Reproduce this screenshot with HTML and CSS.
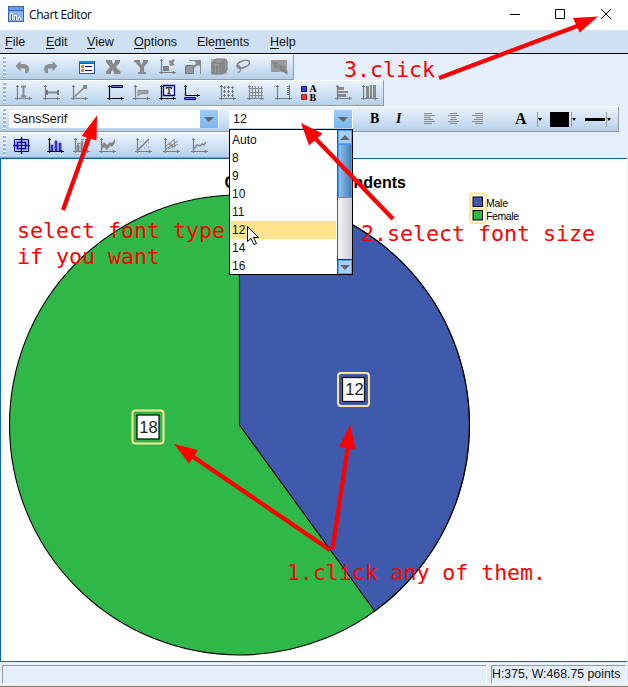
FILE: index.html
```html
<!DOCTYPE html>
<html lang="en">
<head>
<meta charset="utf-8">
<title>Chart Editor</title>
<link rel="stylesheet" href="styles.css">
</head>
<body>
<svg class="defs" width="0" height="0">
  <defs>
    <symbol id="axes" viewBox="0 0 18 18"><path d="M2.500 1v15M0 14.500h17M1 2.500h3M14.500 13v3" fill="none" stroke="currentColor" stroke-width="1.200"/></symbol>
  </defs>
</svg>
<div class="window">
  <header class="titlebar">
    <svg class="app-icon" width="16" height="16" viewBox="0 0 16 16" shape-rendering="crispEdges"><path fill="#3165c4" d="M0 0h16v16H0z"/><path fill="#6f9ae6" d="M1 1h14v3H1z"/><path fill="#8fb3f0" d="M1 5h14v10H1z"/><path d="M2.500 14V7.500h2V14M6.500 14V9.500h2V14M10.500 14v-3h2v3" fill="#3165c4" stroke="#e8f1ff"/></svg>
    <span class="title">Chart Editor</span>
    <svg class="controls" width="100" height="14" viewBox="0 0 100 14"><path d="M0 7.500h10M45.500 2.500h9v9h-9zM91 2l10 10M101 2L91 12" fill="none" stroke="#000"/></svg>
  </header>
  <nav class="menubar">
    <span><u>F</u>ile</span><span><u>E</u>dit</span><span><u>V</u>iew</span><span><u>O</u>ptions</span><span>Ele<u>m</u>ents</span><span><u>H</u>elp</span>
  </nav>

  <div class="toolbar edit-tools">
    <i class="grip"></i>
    <svg viewBox="0 0 18 18"><path d="M1.500 8l5-5v3h4q4.500 1 4.500 5t-4 4.500v-3q1-2-1-2H6.500v3z" fill="#8b8f94"/></svg>
    <svg viewBox="0 0 18 18"><path d="M15.500 8l-5-5v3h-4Q2 7 2 11t4 4.500v-3q-1-2 1-2h3.500v3z" fill="#8b8f94"/></svg>
    <svg viewBox="0 0 18 18" shape-rendering="crispEdges"><path d="M0 3h16v13H0z" fill="#1c5aa8"/><path d="M0 3h15v2H0z" fill="#1688e8"/><path d="M1 6h14v9H1z" fill="#fff"/><path d="M2 7h3v3H2zM2 11h3v3H2z" fill="#f47b20"/><path d="M6 8.500h7M6 12.500h7" stroke="#00008b"/></svg>
    <svg viewBox="0 0 18 18"><path d="M1 2h6v2l1.500 2L10 4V2h5v2l-4 5 4.500 4.500V16H9v-2l-1.500-2L6 14v2H1v-2.500L5 9 1 4z" fill="#888"/></svg>
    <svg viewBox="0 0 18 18"><path d="M1 2h6v2l1.500 3L10 4V2h5v2l-4 5v5h2v2H5v-2h2V9.500L2 4H1z" fill="#888"/></svg>
    <svg viewBox="0 0 18 18"><use href="#axes"/><path d="M4.500 8.500h5v4h-5z" fill="#888" stroke="#777"/><path d="M10 2l1 6 5-1-2-2 2-3-2-1-2 2z" fill="#888"/></svg>
    <svg viewBox="0 0 18 18"><path d="M.5 7.500h8v8h-8z" fill="#999" stroke="#777"/><path d="M4 2.500h11.500V16" fill="none" stroke="#888"/><path d="M9 2h6v6l-2-1-4 3-1-1 3-4z" fill="#888"/></svg>
    <svg viewBox="0 0 18 18"><path d="M0 1h16v15H0z" fill="#aaa"/><path d="M1 5l4-4h9l2 2v9l-4 4H1zM1 5h10v11M11 5l4-4M3 7v9M6 7v9M9 6v9M13 5v9" fill="#999" stroke="#777"/></svg>
    <svg viewBox="0 0 18 18"><path d="M3 10Q0 7 5 4q5-3 9-1 2 4-4 6-6 3-7 0 0-3 2 0 2 3-2 6" fill="none" stroke="#888" stroke-width="1.500"/></svg>
    <svg viewBox="0 0 18 18"><path d="M0 2h16v12H0z" fill="#999"/><path d="M1 5h5l4 4h5M4 6v3h4M9 9l7 4v3l-7-5z" fill="#888" stroke="#7d7d7d"/></svg>
  </div>

  <div class="toolbar element-tools">
    <i class="grip"></i>
    <svg viewBox="0 0 18 18"><use href="#axes"/><path d="M6 2.500h5M6 12.500h5M8.500 2v11" stroke="#888" stroke-width="2"/></svg>
    <svg viewBox="0 0 18 18"><use href="#axes"/><path d="M4 8.500h12" stroke="#888" stroke-width="2"/><path d="M4 6v5M15 6v5" stroke="#777" stroke-width="2"/></svg>
    <svg viewBox="0 0 18 18"><use href="#axes"/><path d="M3 13L14 3" stroke="#888" stroke-width="1.600"/><path d="M12 1h4v4h-4z" fill="#888"/></svg>
    <svg class="on" viewBox="0 0 18 18"><use href="#axes"/><path d="M4.500 1.500h11v2h-11z" fill="#77c" stroke="#00008b"/></svg>
    <svg viewBox="0 0 18 18"><use href="#axes"/><path d="M5 6.500h10v3H8L5 12z" fill="#aaa" stroke="#888"/></svg>
    <svg class="on" viewBox="0 0 18 18"><use href="#axes"/><path d="M4.500 1.500h11v10h-11z" fill="#eef" stroke="#00008b" stroke-width="1.300"/><path d="M7.500 5V3.500h5V5M10 3v6.500M8.500 9.500h3" fill="none" stroke="#333" stroke-width="1.300"/></svg>
    <svg class="on" viewBox="0 0 18 18"><path d="M2.500 1v10.500H17M1 2.500h3M14.500 10v3" fill="none" stroke="#000" stroke-width="1.200"/><path d="M1.500 13.500h11v2h-11z" fill="#66d" stroke="#00008b"/></svg>
    <svg viewBox="0 0 18 18"><use href="#axes"/><path d="M4 3.500h12M4 7.500h12M4 11.500h12" stroke="#888" stroke-dasharray="3 1"/><path d="M5 3.500h11M5 7.500h11M5 11.500h11" stroke="#777" stroke-width="3" stroke-dasharray="1 3"/></svg>
    <svg viewBox="0 0 18 18"><use href="#axes"/><path d="M2 4.500h14M2 8.500h14M2 11.500h14M5.500 2v13M8.500 2v13M11.500 2v13M14.500 2v13" stroke="#888"/></svg>
    <svg viewBox="0 0 18 18"><use href="#axes"/><path d="M14.500 1v13M12 2.500h2M12 4.500h2M12 6.500h2M12 8.500h2M12 10.500h2" stroke="#777"/></svg>
    <svg viewBox="0 0 18 18"><path d="M.5 2.500h5v5h-5z" fill="#3344d8" stroke="#00006b"/><path d="M.5 10.500h5v5h-5z" fill="#e33" stroke="#922"/><g class="ab"><text x="8.500" y="8">A</text><text x="8.500" y="17">B</text></g></svg>
    <svg viewBox="0 0 18 18"><use href="#axes"/><path d="M3 3h6v3H3zM3 7h10v2H3zM3 10h8v3H3z" fill="#888"/></svg>
    <svg viewBox="0 0 18 18"><use href="#axes"/><path d="M5 2h3v12H5zM9 1h2v13H9zM12 1h3v13h-3z" fill="#888"/></svg>
  </div>

  <div class="toolbar format-tools">
    <i class="grip"></i>
    <div class="combo font-combo"><span>SansSerif</span><b class="drop"></b></div>
    <div class="combo size-combo"><span>12</span><b class="drop"></b>
      <div class="menu">
        <ul><li>Auto</li><li>8</li><li>9</li><li>10</li><li>11</li><li class="selected">12</li><li>14</li><li>16</li></ul>
        <div class="scrollbar"><b class="arrow up"></b><b class="thumb"></b><b class="track"></b><b class="arrow down"></b></div>
      </div>
    </div>
    <span class="style-btn">B</span>
    <span class="style-btn italic">I</span>
    <svg viewBox="0 0 18 18"><path d="M0 3.500h8M0 5.500h11M0 7.500h7M0 9.500h9M0 11.500h11M0 13.500h8" stroke="#888"/></svg>
    <svg viewBox="0 0 18 18"><path d="M2 3.500h7M0 5.500h11M3 7.500h5M2 9.500h7M0 11.500h11M2 13.500h7" stroke="#888"/></svg>
    <svg viewBox="0 0 18 18"><path d="M3 3.500h8M0 5.500h11M4 7.500h7M2 9.500h9M0 11.500h11M3 13.500h8" stroke="#888"/></svg>
    <span class="style-btn letter">A</span><i class="split"></i>
    <span class="swatch"></span><i class="split"></i>
    <span class="stroke"></span><i class="split"></i>
  </div>

  <div class="toolbar fit-tools">
    <i class="grip"></i>
    <svg viewBox="0 0 18 18"><path d="M1.500 2.500h14v12h-14z" fill="#b9b9f5" stroke="#0000b5"/><path d="M4.500 5.500h8v6h-8z" fill="#fff" stroke="#0000b5" stroke-width="1.500"/><path d="M8.500 0v17M0 8.500h17" stroke="#0000b5" stroke-width="1.500"/></svg>
    <svg class="on" viewBox="0 0 18 18"><use href="#axes"/><path d="M4 8h2v6H4zM8 4h2v10H8zM12 6h2v8h-2z" fill="#4444d8" stroke="#1111a8" stroke-width=".7"/></svg>
    <svg viewBox="0 0 18 18"><use href="#axes"/><path d="M4 8h2v6H4zM8 5h2v9H8zM12 5h2v9h-2zM5 6v3M9 2v4M13 2v4M4 6.500h3M8 2.500h3M12 2.500h3" fill="#888" stroke="#888"/></svg>
    <svg viewBox="0 0 18 18"><use href="#axes"/><path d="M2 9l3-4 3 3 3-3 2 1 3-4v4l-3 4-2-1-3 4-3-3-3 3z" fill="#888"/></svg>
    <svg viewBox="0 0 18 18"><use href="#axes"/><path d="M3 13L14 2" stroke="#777" stroke-width="1.400"/><path d="M5 5h1M8 4h1M5 9h1M11 8h1M9 11h1M13 6h1M13 10h1" stroke="#888"/></svg>
    <svg viewBox="0 0 18 18"><use href="#axes"/><path d="M3 12L15 4M3 9l9-7M5 12l10-5M5 7l7 3M7 5l3 6M11 3l1 7" stroke="#888"/></svg>
    <svg viewBox="0 0 18 18"><use href="#axes"/><path d="M3 12l3-4 3 1 2-2 2 1 2-3" fill="none" stroke="#888" stroke-width="1.500"/></svg>
  </div>

  <main class="canvas">
    <svg width="626" height="502" viewBox="1 159 626 502">
      <text class="chart-title" x="224.500" y="188" textLength="181.500">Gender of Respondents</text>
      <g stroke="#000" stroke-width="1.100">
        <circle cx="239.500" cy="425" r="230" fill="#2fb848"/>
        <path d="M239.500 425V195A230 230 0 0 1 374.700 611z" fill="#3f59ac"/>
      </g>
      <g class="value">
        <rect class="halo" x="132.500" y="410.500" width="31" height="33" rx="3"/><rect class="box" x="137" y="415" width="22" height="24"/><text x="148.500" y="433">18</text>
        <rect class="halo" x="338" y="373" width="31" height="33" rx="3"/><rect class="box" x="342.500" y="377.500" width="22" height="24"/><text x="354.500" y="395">12</text>
      </g>
      <g class="legend">
        <text x="486" y="207" textLength="22">Male</text><text x="486" y="220" textLength="33">Female</text>
        <rect class="halo" x="470" y="193.500" width="16" height="29.500" rx="3"/><path class="halo" d="M471 208.500h14"/>
        <rect x="473" y="197" width="9.500" height="9.500" fill="#3f59ac" stroke="#000"/><rect x="473" y="210.500" width="9.500" height="9.500" fill="#2fb848" stroke="#000"/>
      </g>
    </svg>
  </main>

  <footer class="statusbar"><span></span><span>H:375, W:468.75 points</span></footer>

  <svg class="notes" width="628" height="687" viewBox="0 0 628 687">
    <path d="M247.500 226.500v15l3.500-3 3 6 2.500-1-3-6h5z" fill="#fff" stroke="#000"/>
    <g fill="none" stroke="#f00" stroke-width="4.300"><path d="M63 210L90 135M393 219L313 136M439 78L580 25M330 550L192 456M332.500 549L348 446"/></g>
    <path fill="#f00" d="M97 115.500L81.500 136 96.500 140.500zM301 123l8 22.500 13.500-12zM598 16.500l-25 1.500 6.700 14.500zM174 444l24 6-9 13.500zM350.300 424.500L339 447l16.500 2.500z"/>
    <text x="344" y="77" textLength="91">3.click</text>
    <text x="17" y="238" textLength="208">select font type</text>
    <text x="17" y="264" textLength="143">if you want</text>
    <text x="361" y="241" textLength="234">2.select font size</text>
    <text x="287" y="580" textLength="259">1.click any of them.</text>
  </svg>
</div>
</body>
</html>
```
FILE: styles.css
```css
* { box-sizing: border-box; }
body { margin: 0; font: 12.5px "Liberation Sans", Arial, sans-serif; color: #111; }
.defs { display: none; }
.window { position: relative; width: 628px; height: 687px; overflow: hidden; background: #e4effb; display: flex; flex-direction: column; }

.titlebar { height: 30px; background: #fff; display: flex; align-items: center; padding: 0 16px 2px 8px; flex: none; }
.title { font: 12px "Open Sans", "Noto Sans", sans-serif; margin-left: 5px; letter-spacing: -.4px; color: #000; }
.controls { margin-left: auto; overflow: visible; margin-right: 2px; }

.menubar { height: 24px; flex: none; background: #cee0f1; border-bottom: 1px solid #000; display: grid; grid-template-columns: 41px 41px 47px 63px 73px 60px; align-items: center; padding-left: 5px; }
.menubar u { text-underline-offset: 2px; }

.toolbar { height: 26px; flex: none; display: grid; align-items: center; background: linear-gradient(#eaf3fc, #cfe1f3 55%, #b4d0eb); border-top: 1px solid #fff; border-bottom: 1px solid #999; border-right: 1px solid #999; color: #7d7d7d; }
.toolbar > svg { width: 18px; height: 18px; display: block; overflow: visible; }
.on { color: #000; }
.grip { width: 3px; height: 22px; margin-left: 3px; background: repeating-linear-gradient(#fff 0 1px, #a3b4c7 1px 3px, transparent 3px 4px); }
.edit-tools { width: 294px; grid-template-columns: 14px 28px 37px 26px 28px 26px 26px 26px 24px 36px 22px; }
.element-tools { width: 384px; grid-template-columns: 15px 28px 28px 36px 26px 26px 24px 36px 28px 28px 26px 34px 26px 20px; }
.fit-tools { width: 300px; padding-top: 1px; grid-template-columns: 13px 34px 26px 26px 36px 28px 28px 20px; }
.ab { font: bold 10px "Liberation Serif", serif; fill: #000; }

.format-tools { width: 619px; grid-template-columns: 9px 220px 124px 13px 27px 34px 24px 24px 37px 25px 14px 21px 14px 21px 10px; }
.combo { height: 18px; background: #fff; display: flex; align-items: center; justify-content: space-between; padding-left: 4px; color: #111; position: relative; }
.font-combo { width: 210px; }
.size-combo { width: 124px; grid-column: 3; }
.drop { width: 18px; height: 18px; margin-right: 1px; background: linear-gradient(#9dccfa, #7db4ec); display: grid; place-items: center; }
.drop::before, .arrow::before { content: ""; border: 5px solid transparent; border-top: 5px solid #666; border-bottom: 0; }
.style-btn { font: bold 14px "Liberation Serif", serif; color: #000; grid-column: 5; padding-left: 4px; }
.italic { font-style: italic; grid-column: 6; padding-left: 3px; }
.format-tools > .letter { grid-column: auto; font-size: 16px; padding-left: 7px; }
.split { height: 15px; border-left: 1px solid #999; display: flex; align-items: center; margin-left: 1px; }
.format-tools > .letter + .split { margin-left: 2px; }
.split::before { content: ""; border: 2.5px solid transparent; border-top: 3px solid #000; border-bottom: 0; }
.swatch { width: 19px; height: 15px; background: #000; }
.stroke { width: 20px; height: 3px; background: #000; }
.format-tools { grid-template-columns: 9px 220px 124px 13px 27px 31px 24px 24px 36px 27px 15px 20px 15px 20px 10px; }

.menu { position: absolute; z-index: 2; left: 0; top: 19px; width: 124px; height: 146px; background: #fff; border: 1px solid #000; display: flex; }
.menu ul { list-style: none; margin: 0; padding: 1px 0 0 1px; flex: 1; }
.menu li { height: 18px; line-height: 18px; padding-left: 1px; margin-right: 1px; font-size: 12px; }
.menu .selected { background: #fee48c; }
.scrollbar { width: 15px; display: flex; flex-direction: column; border-left: 1px solid #555; }
.arrow { height: 14px; background: #a5cffc; border: 1px solid #58a5ee; display: grid; place-items: center; }
.up::before { transform: rotate(180deg); }
.thumb { height: 54px; background: linear-gradient(90deg, #93bfe9, #447fba); border: 1px solid #3d99f5; }
.track { flex: 1; background: linear-gradient(90deg, #f3f3f8, #c9c9d4); border-bottom: 1px solid #333; }

.canvas { flex: none; width: 627px; height: 504px; background: #fff; border: 1px solid #1064b4; border-right: 0; }
.canvas svg { display: block; }
.chart-title { font-weight: bold; font-size: 16px; fill: #000; }
.halo { fill: none; stroke: #fde590; stroke-width: 2; }
.value { font-size: 16.5px; text-anchor: middle; fill: #222; }
.box { fill: #fff; stroke: #111; stroke-width: 1.3; }
.legend { font-size: 10.5px; fill: #000; }

.statusbar { height: 25px; flex: none; display: grid; grid-template-columns: 485px 135px; gap: 4px; padding: 3px 0 4px 2px; border-bottom: 1px solid #8d815b; font-size: 12.3px; }
.statusbar span { border: 1px solid #fff; border-top-color: #999; border-left-color: #999; line-height: 17px; white-space: nowrap; }

.notes { position: absolute; inset: 0; z-index: 3; pointer-events: none; }
.notes text { font: 21.6px "DejaVu Sans Mono", monospace; fill: #f00; }
```
